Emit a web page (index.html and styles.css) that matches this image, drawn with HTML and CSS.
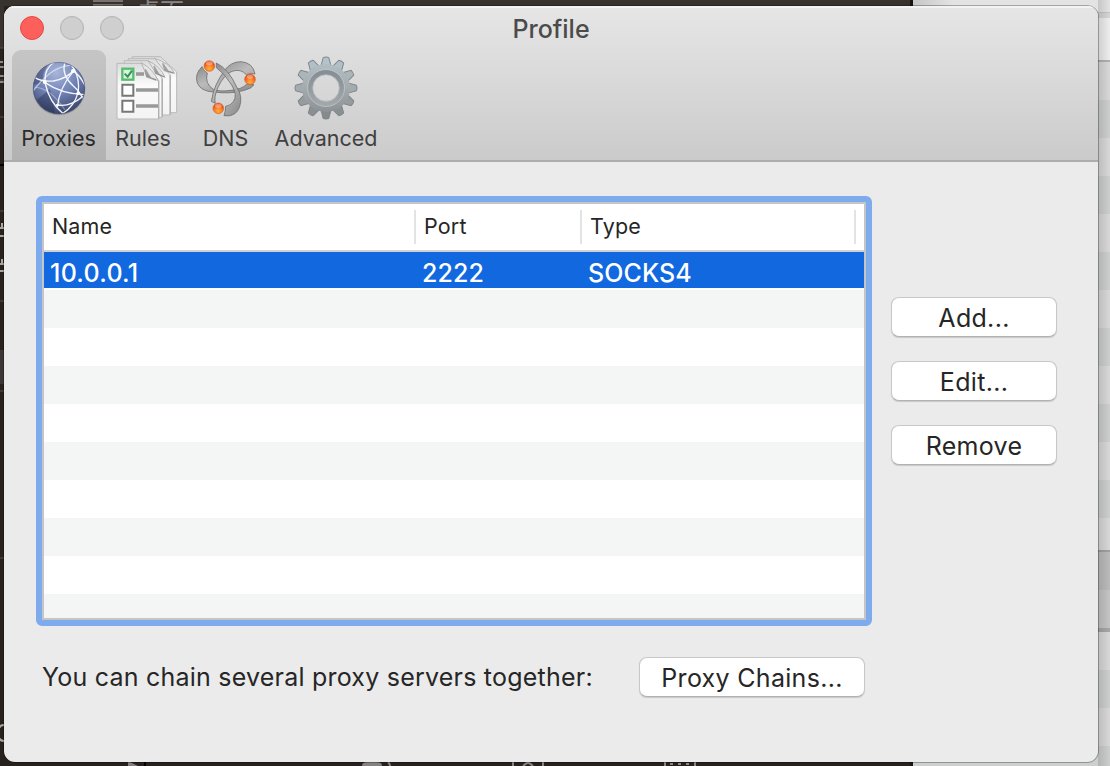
FILE: index.html
```html
<!DOCTYPE html>
<html lang="en">
<head>
<meta charset="utf-8">
<title>Profile</title>
<link rel="stylesheet" href="styles.css">
</head>
<body>
<div class="desktop">
  <svg class="backdrop" width="1110" height="766" viewBox="0 0 1110 766" aria-hidden="true">
    <defs>
      <linearGradient id="edge"><stop offset="0" stop-color="#000" stop-opacity=".13"/><stop offset="1" stop-color="#000" stop-opacity="0"/></linearGradient>
    </defs>
    <rect width="911" height="766" fill="#28221f"/>
    <rect width="911" height="6" fill="#38322f"/>
    <rect x="910" width="3" height="766" fill="#171515"/>
    <rect width="4" height="48" fill="#39332f"/>
    <path d="M0 48h4M0 80h4M0 117h4M0 211h4M0 301h4M0 391h4M0 558h4" stroke="#55504c"/>
    <path d="M0 62h3M0 67h4M0 76h4M0 82h4" stroke="#8d8987" stroke-width="2"/>
    <path d="M0 165h4" stroke="#000" stroke-width="2"/>
    <path d="M0 350h4v34h-4z" fill="#3b3837"/>
    <path d="M0 228h4M0 236h4M0 264h4M0 271h4M2 223v5M2 259v5" stroke="#aaa7a3" stroke-width="2"/>
    <path d="M4 725q-6 0-6 8t6 8" fill="none" stroke="#aaa7a3" stroke-width="2"/>
    <path d="M93 1h30M93 5h30" stroke="#77726f" stroke-width="2"/>
    <path d="M128 762h2l8 4h-10zM362 766q0-4 5-4h10q5 0 5 4z" fill="#858180"/>
    <path d="M388 762q2 2 2 4M513 762v4M543 762v4M523 766l5-4 5 4M665 762v4M695 762v4M670 764h3M678 764h3M686 764h3" fill="none" stroke="#8b8785" stroke-width="2"/>
    <path d="M145 762v4" stroke="#000" stroke-width="2"/>
    <rect x="913" width="197" height="766" fill="#d8d8d8"/>
    <path d="M913 0h197v12h-197z" fill="#e3e3e3"/>
    <path d="M913 12h197v6h-197z" fill="#d5d5d5"/>
    <path d="M913 18h197v42h-197z" fill="#ededed"/>
    <path d="M913 12.500h197" stroke="#c4c4c4"/>
    <path d="M913 61h197" stroke="#b0b0b0" stroke-width="2"/>
    <path d="M913 100h197v38h-197zM913 176h197v38h-197zM913 252h197v38h-197zM913 328h197v38h-197zM913 404h197v38h-197zM913 480h197v38h-197zM913 670h197v38h-197zM913 746h197v20h-197z" fill="#cccfce"/>
    <path d="M913 552h197v38h-197z" fill="#bbb"/>
    <path d="M913 590h197v38h-197z" fill="#c4c4c4"/>
    <path d="M913 551h197" stroke="#a0a0a0" stroke-width="2"/>
    <path d="M913 630h197" stroke="#a6a6a6" stroke-width="4"/>
    <rect x="1098" width="12" height="766" fill="url(#edge)"/>
    <rect x="913" width="40" height="8" fill="url(#edge)"/>
  </svg>
  <span class="desktop-label">桌面</span>

  <main class="window">
    <header class="chrome">
      <div class="titlebar">
        <div class="lights"><i class="light close"></i><i class="light"></i><i class="light"></i></div>
        <h1 class="title">Profile</h1>
      </div>
      <nav class="toolbar">
        <a class="tool proxies active">
          <svg width="64" height="64" viewBox="81 168 192 192">
            <defs>
              <radialGradient id="globe" cx=".45" cy=".2" r=".85"><stop offset="0" stop-color="#a9b6da"/><stop offset=".5" stop-color="#6f80b2"/><stop offset="1" stop-color="#333d60"/></radialGradient>
              <clipPath id="globeClip"><circle cx="177" cy="264" r="77"/></clipPath>
            </defs>
            <circle cx="177" cy="267" r="79" fill="#000" opacity=".2"/>
            <circle cx="177" cy="264" r="78" fill="url(#globe)"/>
            <g clip-path="url(#globeClip)">
              <path d="M98 255Q110 200 150 186Q120 225 133 247L98 255zM110 300L150 268 165 340Q130 335 110 300z" fill="#1c2442" opacity=".35"/>
              <g fill="none" stroke="#f3f6ff" stroke-width="4">
                <path d="M104 232Q125 246 160 243Q200 236 222 210"/>
                <path d="M163 186Q128 210 137 255Q148 305 188 340"/>
                <path d="M100 272Q118 248 150 220Q180 198 210 196" opacity=".6"/>
                <path d="M134 247Q185 282 254 284"/>
                <path d="M194 190Q184 225 220 258Q240 275 250 300"/>
                <path d="M212 192Q242 230 234 278Q224 318 186 342"/>
                <path d="M220 214Q178 262 172 322"/>
                <path d="M172 315Q210 322 250 288"/>
                <path d="M219 212Q240 226 256 258"/>
                <path d="M104 262Q150 262 195 330" opacity=".35"/>
              </g>
              <g fill="#fff"><circle cx="134" cy="246" r="6"/><circle cx="219" cy="213" r="6"/><circle cx="234" cy="280" r="5"/><circle cx="172" cy="315" r="4"/></g>
            </g>
            <circle cx="177" cy="264" r="77" fill="none" stroke="#3d4870" stroke-width="2" opacity=".6"/>
          </svg>
          <span>Proxies</span>
        </a>
        <a class="tool rules">
          <svg width="64" height="64" viewBox="345 168 192 192">
            <defs><linearGradient id="paper" x2="0" y2="1"><stop stop-color="#dcdcdc"/><stop offset=".4" stop-color="#fbfbfb"/><stop offset="1" stop-color="#f3f3f3"/></linearGradient></defs>
            <g stroke="#b9b9b9" stroke-width="3" fill="url(#paper)">
              <path d="M397 170H481L530 216V338H397z"/>
              <path d="M385 176H465L510 224V345H385z"/>
              <path d="M373 182H445L486 234V352H373z"/>
              <path d="M351 190H425L476 240V357H351z"/>
            </g>
            <path d="M424 188L440 228 474 242Q462 210 424 188zM444 182L468 220 495 232Q482 200 444 182zM464 175L492 212 524 220Q507 188 464 175z" fill="#e6e6e6" stroke="#b4b4b4" stroke-width="3"/>
            <path d="M436 208l4 22 28 10 -16-6zM462 198l5 22 26 11 -16-8zM488 190l6 20 26 9 -16-6z" fill="#666" stroke="#777" stroke-width="4" opacity=".6"/>
            <path d="M476 357V242M487 350V236M511 344V226" stroke="#b0b0b0" stroke-width="4" fill="none"/>
            <rect x="367" y="206" width="33" height="33" fill="#d9f4df" stroke="#55bd70" stroke-width="7"/>
            <path d="M374 221l9 9 13-18" fill="none" stroke="#35954f" stroke-width="6"/>
            <path d="M367 254h33v33h-33zM367 302h33v33h-33z" fill="#fff" stroke="#777" stroke-width="6"/>
            <path d="M408 222h24M408 270h66M408 318h66" stroke="#999" stroke-width="10"/>
          </svg>
          <span>Rules</span>
        </a>
        <a class="tool dns">
          <svg width="64" height="64" viewBox="42 45 192 192">
            <defs>
              <linearGradient id="metal" x2=".7" y2="1"><stop stop-color="#8c8c8c"/><stop offset=".5" stop-color="#bbb"/><stop offset="1" stop-color="#939393"/></linearGradient>
              <radialGradient id="ball" cx=".5" cy=".75" r=".65"><stop offset="0" stop-color="#ffb13b"/><stop offset=".55" stop-color="#fb7b23"/><stop offset="1" stop-color="#df4619"/></radialGradient>
            </defs>
            <g fill="url(#metal)" stroke="#707070" stroke-width="2.500" stroke-linejoin="round">
              <path d="M66 77Q43 100 52 126Q62 151 101 153Q153 160 193 148Q216 142 222 131L200 130Q185 145 153 148Q118 153 100 145Q73 128 82 96Q70 90 66 77z"/>
              <path d="M225 99Q219 65 183 62Q152 62 134 88Q102 130 94 181L106 187Q101 168 113 141Q132 100 156 91Q182 82 199 101Q212 94 225 99z"/>
              <path d="M132 224Q166 229 178 200Q190 166 170 138Q146 84 109 66V80Q134 97 155 132Q174 163 160 182Q152 194 137 196Q137 211 132 224z"/>
            </g>
            <g fill="url(#ball)" stroke="#d7662c" stroke-width="2"><circle cx="88" cy="75" r="16"/><circle cx="210" cy="115" r="16"/><circle cx="115" cy="202" r="16"/></g>
            <g fill="#fff" opacity=".35"><ellipse cx="88" cy="67" rx="10" ry="6"/><ellipse cx="210" cy="107" rx="10" ry="6"/><ellipse cx="115" cy="194" rx="10" ry="6"/></g>
          </svg>
          <span>DNS</span>
        </a>
        <a class="tool advanced">
          <svg width="64" height="64" viewBox="-32 -32 64 64">
            <defs>
              <linearGradient id="steel" gradientUnits="userSpaceOnUse" x1="0" y1="-31" x2="0" y2="31"><stop stop-color="#b4c3ca"/><stop offset=".5" stop-color="#a4abaf"/><stop offset="1" stop-color="#858a8d"/></linearGradient>
              <linearGradient id="ring" x2="0" y2="1"><stop stop-color="#858f94"/><stop offset="1" stop-color="#a2a7aa"/></linearGradient>
            </defs>
            <g stroke="#7d878c">
              <path d="M-5-22L-2.800-30.500Q0-31.500 2.800-30.500L5-22z" fill="#b4c2c9"/>
              <path d="M-5-22L-2.800-30.500Q0-31.500 2.800-30.500L5-22z" fill="#b2bfc6" transform="rotate(30)"/>
              <path d="M-5-22L-2.800-30.500Q0-31.500 2.800-30.500L5-22z" fill="#abb5ba" transform="rotate(60)"/>
              <path d="M-5-22L-2.800-30.500Q0-31.500 2.800-30.500L5-22z" fill="#a4abaf" transform="rotate(90)"/>
              <path d="M-5-22L-2.800-30.500Q0-31.500 2.800-30.500L5-22z" fill="#969b9e" transform="rotate(120)"/>
              <path d="M-5-22L-2.800-30.500Q0-31.500 2.800-30.500L5-22z" fill="#8a8f92" transform="rotate(150)"/>
              <path d="M-5-22L-2.800-30.500Q0-31.500 2.800-30.500L5-22z" fill="#858a8d" transform="rotate(180)"/>
              <path d="M-5-22L-2.800-30.500Q0-31.500 2.800-30.500L5-22z" fill="#8a8f92" transform="rotate(210)"/>
              <path d="M-5-22L-2.800-30.500Q0-31.500 2.800-30.500L5-22z" fill="#969b9e" transform="rotate(240)"/>
              <path d="M-5-22L-2.800-30.500Q0-31.500 2.800-30.500L5-22z" fill="#a4abaf" transform="rotate(270)"/>
              <path d="M-5-22L-2.800-30.500Q0-31.500 2.800-30.500L5-22z" fill="#abb5ba" transform="rotate(300)"/>
              <path d="M-5-22L-2.800-30.500Q0-31.500 2.800-30.500L5-22z" fill="#b2bfc6" transform="rotate(330)"/>
            </g>
            <circle r="19.500" fill="none" stroke="url(#steel)" stroke-width="9"/>
            <circle r="15.800" fill="none" stroke="url(#ring)" stroke-width="5"/>
            <circle r="18.500" fill="none" stroke="#c0c8cc" stroke-width=".8"/>
            <circle r="13.200" fill="none" stroke="#b5bdc1" stroke-width=".8"/>
          </svg>
          <span>Advanced</span>
        </a>
      </nav>
    </header>

    <section class="content">
      <div class="main-row">
        <div class="table">
          <div class="row head"><span class="cell name">Name</span><span class="cell port">Port</span><span class="cell type">Type</span></div>
          <div class="row selected"><span class="cell address">10.0.0.1</span><span class="cell">2222</span><span class="cell">SOCKS4</span></div>
          <div class="stripes"></div>
        </div>
        <div class="actions">
          <button class="button add">Add...</button>
          <button class="button edit">Edit...</button>
          <button class="button remove">Remove</button>
        </div>
      </div>
      <div class="chain-row">
        <span class="hint">You can chain several proxy servers together:</span>
        <button class="button chains">Proxy Chains...</button>
      </div>
    </section>
  </main>
</div>
</body>
</html>
```
FILE: styles.css
```css
* { box-sizing: border-box; }
body { margin: 0; font-family: Inter, "Liberation Sans", sans-serif; color: #262626; }
.desktop { position: relative; width: 1110px; height: 766px; padding: 6px 12px 4px 4px; overflow: hidden; }
.backdrop { position: absolute; left: 0; top: 0; }
.desktop-label { position: absolute; left: 136px; top: -1px; font: 24px/22px "Noto Sans CJK SC", sans-serif; color: #8b8785; }
.window { position: relative; height: 756px; border-radius: 11px; background: #ebebeb; overflow: hidden; box-shadow: 0 0 0 1px rgba(0,0,0,.28); }
.chrome { height: 156px; background: linear-gradient(#e6e6e6, #cbcbcb); border-bottom: 2px solid #acacac; box-shadow: inset 0 2px 0 #f3f3f3; }
.titlebar { height: 44px; display: grid; grid-template: 44px / 1fr auto 1fr; align-items: center; padding-left: 16px; }
.lights { display: flex; gap: 16px; }
.light { width: 24px; height: 24px; border-radius: 50%; background: #cfcfcf; border: 1px solid #b0b0b0; }
.light.close { background: #fd5f5a; border-color: #e04b48; }
.title { margin: 0 8px 0 -8px; padding-top: 2px; font-size: 25px; line-height: 42px; font-weight: 500; color: #4b4b4b; }
.toolbar { display: flex; height: 110px; padding-left: 8px; }
.tool { display: flex; flex-direction: column; align-items: center; padding-top: 6px; border-radius: 9px 9px 0 0; font-size: 21.5px; line-height: 26px; color: #404040; font-weight: 430; }
.tool svg { display: block; margin-bottom: 5px; }
.tool.active { background: linear-gradient(#c5c5c5, #b2b2b2); color: #2c2c2c; }
.proxies { width: 94px; padding-right: 1px; }
.rules { width: 74px; }
.rules svg { margin-left: 8px; }
.dns { width: 91px; }
.advanced { width: 110px; }
.content { padding: 34px 32px; }
.main-row { display: flex; gap: 19px; }
.table { width: 836px; height: 430px; padding: 2px; border: 6px solid #7eabee; border-radius: 6px; background: #c5c5c5; }
.row { display: grid; grid-template-columns: 372px 166px 282px; align-items: center; }
.head { height: 48px; background: #fff; border-bottom: 2px solid #d2d2d2; font-size: 21.5px; letter-spacing: .15px; }
.head .cell { padding: 0 0 2px 8px; line-height: 32px; border-right: 2px solid #e3e3e3; }
.head .type { margin-right: 8px; }
.selected { height: 36px; color: #fff; background: #1168df; font-size: 25px; font-weight: 500; letter-spacing: .1px; }
.selected .cell { padding: 6px 0 0 6px; line-height: 30px; }
.selected .address { letter-spacing: .25px; }
.stripes { height: 330px; background: repeating-linear-gradient(#f4f5f5 0 38px, #fff 38px 76px) #fff; background-clip: padding-box; border-top: 2px solid #fff; }
.actions { display: flex; flex-direction: column; gap: 24px; padding-top: 101px; }
.button { width: 166px; height: 40px; padding: 2px 0 0; border: 1px solid #c8c8c8; border-bottom-color: #b2b2b2; border-radius: 8px; background: #fff; box-shadow: 0 1px 1px rgba(0,0,0,.15); font: 25px/36px Inter, sans-serif; letter-spacing: .3px; color: #262626; }
.chain-row { display: flex; align-items: center; gap: 46px; padding: 31px 0 0 6px; white-space: nowrap; }
.hint { width: 551px; font-size: 25px; line-height: 40px; letter-spacing: .22px; }
.chains { width: 226px; }
```
